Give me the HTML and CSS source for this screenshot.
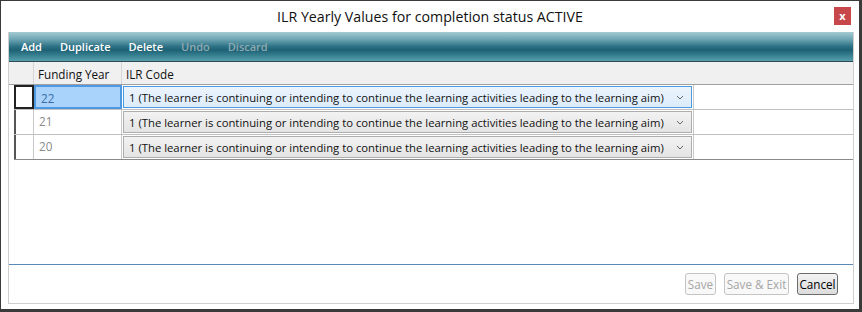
FILE: index.html
```html
<!DOCTYPE html>
<html lang="en">
<head>
  <meta charset="utf-8">
  <title>ILR Yearly Values for completion status ACTIVE</title>
  <link rel="stylesheet" href="styles.css">
</head>
<body>

  <div class="window">
    <div class="titlebar">
      <span class="title">ILR Yearly Values for completion status ACTIVE</span>
      <button class="close" type="button">x</button>
    </div>

    <div class="panel">
      <div class="toolbar">
        <span class="tool">Add</span>
        <span class="tool">Duplicate</span>
        <span class="tool">Delete</span>
        <span class="tool disabled">Undo</span>
        <span class="tool disabled">Discard</span>
      </div>

      <div class="grid">
        <div class="grid-head">
          <div class="hcell"></div>
          <div class="hcell">Funding Year</div>
          <div class="hcell">ILR Code</div>
          <div class="hcell"></div>
        </div>

        <div class="row current">
          <div class="cell rowhead"></div>
          <div class="cell year">22</div>
          <div class="cell code">
            <div class="combo">
              <span>1 (The learner is continuing or intending to continue the learning activities leading to the learning aim)</span>
              <svg width="8" height="5" viewBox="0 0 8 5"><path d="M1 1 L4 4 L7 1" fill="none" stroke="#666" stroke-width="1"/></svg>
            </div>
          </div>
          <div class="cell"></div>
        </div>
        <div class="row">
          <div class="cell rowhead"></div>
          <div class="cell year">21</div>
          <div class="cell code">
            <div class="combo">
              <span>1 (The learner is continuing or intending to continue the learning activities leading to the learning aim)</span>
              <svg width="8" height="5" viewBox="0 0 8 5"><path d="M1 1 L4 4 L7 1" fill="none" stroke="#666" stroke-width="1"/></svg>
            </div>
          </div>
          <div class="cell"></div>
        </div>
        <div class="row">
          <div class="cell rowhead"></div>
          <div class="cell year">20</div>
          <div class="cell code">
            <div class="combo">
              <span>1 (The learner is continuing or intending to continue the learning activities leading to the learning aim)</span>
              <svg width="8" height="5" viewBox="0 0 8 5"><path d="M1 1 L4 4 L7 1" fill="none" stroke="#666" stroke-width="1"/></svg>
            </div>
          </div>
          <div class="cell"></div>
        </div>
      </div>

      <div class="footer">
        <button class="btn save" type="button" disabled>Save</button>
        <button class="btn save-exit" type="button" disabled>Save &amp; Exit</button>
        <button class="btn primary" type="button">Cancel</button>
      </div>
    </div>
  </div>

</body>
</html>
```

FILE: styles.css
```css
*, *::before, *::after {
  margin: 0;
  padding: 0;
  box-sizing: border-box;
}

body {
  width: 862px;
  height: 312px;
  font-family: "Open Sans", "Noto Sans", sans-serif;
  font-size: 11.7px;
  color: #000;
  background: #fff;
}

.window {
  height: 312px;
  display: flex;
  flex-direction: column;
  border: 1px solid #3a3a3a;
  border-right-width: 3px;
  border-bottom-width: 3px;
  background: #fff;
}

.titlebar {
  height: 31px;
  display: flex;
  align-items: center;
  justify-content: center;
  position: relative;
}

.title {
  font-size: 14.2px;
  color: #111;
}

.close {
  position: absolute;
  top: 6px;
  right: 8px;
  width: 17px;
  height: 18px;
  border: none;
  background: #c7474a;
  color: #fff;
  font-family: inherit;
  font-size: 11px;
  font-weight: 700;
  line-height: 16px;
}

.panel {
  flex: 1;
  margin: 0 5px 5px 7px;
  display: flex;
  flex-direction: column;
  border: 1px solid #cfcfcf;
  border-top: none;
}

.toolbar {
  height: 30px;
  display: flex;
  align-items: center;
  gap: 18px;
  padding-left: 12px;
  background: linear-gradient(#a3cbd3 0%, #6fa6b4 25%, #2c7184 50%, #1d6174 62%, #3d8797 85%, #56a0ad 100%);
  border-bottom: 1px solid #2d4c58;
}

.tool {
  color: #fff;
  font-weight: 600;
  font-size: 11px;
}

.tool.disabled {
  color: #8fa9b1;
}

.grid {
  flex: 1;
  display: flex;
  flex-direction: column;
}

.grid-head {
  height: 23px;
  display: grid;
  grid-template-columns: 25px 88px 572px 1fr;
  background: #f0f0f0;
  border-bottom: 1px solid #a0a0a0;
}

.hcell {
  padding: 4px 0 0 4px;
  border-right: 1px solid #d5d5d5;
  color: #111;
}

.hcell:nth-child(n+3) {
  border-right: none;
}

.row {
  height: 25px;
  margin-left: 5px;
  display: grid;
  grid-template-columns: 20px 88px 572px 1fr;
  border-bottom: 1px solid #c0c0c0;
}

.row:last-child {
  border-bottom-color: #8a8a8a;
}

.cell {
  border-right: 1px solid #c8c8c8;
}

.cell:last-child {
  border-right: none;
}

.rowhead {
  border-left: 2px solid #555;
}

.year {
  padding: 3px 0 0 5px;
  color: #8a8a8a;
}

.code {
  padding: 1px;
}

.combo {
  height: 22px;
  display: flex;
  align-items: center;
  justify-content: space-between;
  padding: 0 7px 0 5px;
  border: 1px solid #adadad;
  background: linear-gradient(#f2f2f2, #e4e4e4);
  color: #111;
  font-size: 11.3px;
  white-space: nowrap;
}

.combo svg {
  flex: none;
}

.current .rowhead {
  background: #fff;
  border: 2px solid #222;
}

.current .year {
  background: #a9d3fb;
  border: 2px solid #4f98e2;
  color: #3a6ca8;
}

.current .combo {
  border-color: #4c9ae0;
  background: linear-gradient(#ecf4fc, #dcecfc);
}

.footer {
  height: 39px;
  display: flex;
  justify-content: flex-end;
  align-items: flex-start;
  gap: 8px;
  padding: 8px 15px 0 0;
  border-top: 1px solid #5b8ab7;
}

.btn {
  height: 22px;
  border: 1px solid #c4c4c4;
  border-radius: 3px;
  background: #f8f8f8;
  color: #a6a6a6;
  font-family: inherit;
  font-size: 11.7px;
  white-space: nowrap;
}

.save {
  width: 31px;
}

.save-exit {
  width: 65px;
}

.btn.primary {
  width: 41px;
  border-color: #6b6b6b;
  background: linear-gradient(#f3f3f3, #dcdcdc);
  color: #000;
}
```
